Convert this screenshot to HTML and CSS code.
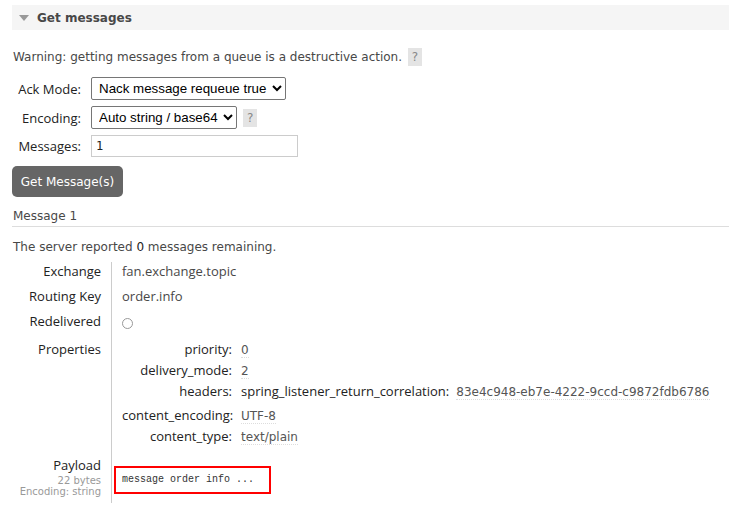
FILE: index.html
```html
<!DOCTYPE html>
<html lang="en">
<head>
  <meta charset="UTF-8" />
  <title>Get messages</title>
  <link rel="stylesheet" href="styles.css">
</head>
<body>
  <div class="section">
    <h2 class="section-head"><span class="arrow"></span>Get messages</h2>

    <div class="section-body">
      <p class="warning">Warning: getting messages from a queue is a destructive action. <span class="help">?</span></p>

      <form class="get-form">
        <div class="form-grid">
          <label for="ackmode">Ack Mode:</label>
          <div>
            <select id="ackmode">
              <option>Nack message requeue true</option>
              <option>Automatic ack</option>
              <option>Reject requeue true</option>
              <option>Reject requeue false</option>
            </select>
          </div>

          <label for="encoding">Encoding:</label>
          <div>
            <select id="encoding">
              <option>Auto string / base64</option>
              <option>base64</option>
            </select>
            <span class="help">?</span>
          </div>

          <label for="count">Messages:</label>
          <div><input type="text" id="count" value="1" /></div>
        </div>
        <button type="button" class="get-btn">Get Message(s)</button>
      </form>

      <div class="message">
        <h3>Message 1</h3>
        <p class="remaining">The server reported <b>0</b> messages remaining.</p>

        <div class="facts">
          <div class="fact-key">Exchange</div>
          <div class="fact-val">fan.exchange.topic</div>

          <div class="fact-key">Routing Key</div>
          <div class="fact-val">order.info</div>

          <div class="fact-key">Redelivered</div>
          <div class="fact-val"><span class="radio"></span></div>

          <div class="fact-key">Properties</div>
          <div class="fact-val">
            <div class="props">
              <div class="prop-key">priority:</div>
              <div class="prop-val"><span>0</span></div>
              <div class="prop-key">delivery_mode:</div>
              <div class="prop-val"><span>2</span></div>
              <div class="prop-key">headers:</div>
              <div class="prop-val">
                <div class="props nested">
                  <div class="prop-key">spring_listener_return_correlation:</div>
                  <div class="prop-val"><span>83e4c948-eb7e-4222-9ccd-c9872fdb6786</span></div>
                </div>
              </div>
              <div class="prop-key after-nested">content_encoding:</div>
              <div class="prop-val after-nested"><span>UTF-8</span></div>
              <div class="prop-key">content_type:</div>
              <div class="prop-val"><span>text/plain</span></div>
            </div>
          </div>

          <div class="fact-key payload-key">
            Payload
            <sub>22 bytes</sub>
            <sub>Encoding: string</sub>
          </div>
          <div class="fact-val">
            <pre class="payload">message order info ...</pre>
          </div>
        </div>
      </div>
    </div>
  </div>
</body>
</html>
```

FILE: styles.css
```css
* {
  margin: 0;
  padding: 0;
  box-sizing: border-box;
}

body {
  font: 12px "DejaVu Sans", Verdana, sans-serif;
  color: #484848;
  background: #fff;
  padding: 5px 0 0 12px;
  overflow: hidden;
}

.section-head {
  display: flex;
  align-items: center;
  height: 25px;
  background: #f5f5f5;
  font-size: 12px;
  font-weight: bold;
  color: #484848;
  padding-left: 7px;
}

.arrow {
  width: 0;
  height: 0;
  border-left: 5px solid transparent;
  border-right: 5px solid transparent;
  border-top: 6px solid #999;
  margin-right: 8px;
}

.section-body {
  padding-top: 18px;
}

.warning {
  line-height: 18px;
  padding-left: 1px;
}

.help {
  display: inline-block;
  background: #e4e4e4;
  color: #888;
  padding: 0 4px;
  line-height: 18px;
  margin-left: 2px;
}

.form-grid {
  display: grid;
  grid-template-columns: 69px auto;
  column-gap: 10px;
  row-gap: 6px;
  margin-top: 11px;
  align-items: center;
}

.form-grid label {
  text-align: right;
  font: 13px "Open Sans", sans-serif;
  color: #222;
}

.form-grid > div {
  display: flex;
  align-items: center;
  gap: 4px;
}

select {
  font: 13.33px "Liberation Sans", Arial, sans-serif;
  color: #000;
  height: 23px;
  padding: 0 0 0 3px;
  border: 1px solid #767676;
  border-radius: 2px;
  background: #fff;
}

#ackmode {
  width: 195px;
}

#encoding {
  width: 146px;
}

input {
  width: 207px;
  height: 22px;
  border: 1px solid #ccc;
  font: 12px "DejaVu Sans Mono", monospace;
  padding: 0 4px;
  color: #222;
}

.get-btn {
  margin-top: 9px;
  background: #666;
  color: #fff;
  border: none;
  border-radius: 5px;
  font: 12px "DejaVu Sans", Verdana, sans-serif;
  width: 111px;
  height: 31px;
}

.message h3 {
  font-size: 12px;
  font-weight: normal;
  margin-top: 12px;
  padding: 0 0 3px 1px;
  border-bottom: 1px solid #ddd;
}

.remaining {
  margin-top: 13px;
  padding-left: 1px;
}

.remaining b {
  font-weight: normal;
  color: #222;
}

.facts {
  display: grid;
  grid-template-columns: 99px auto;
  margin-top: 8px;
}

.fact-key {
  text-align: right;
  font: 13px "Open Sans", sans-serif;
  color: #222;
  padding: 0 10px 6px 0;
  line-height: 19px;
}

.fact-val {
  border-left: 1px solid #ccc;
  padding: 0 0 6px 10px;
  font: 13px "Open Sans", sans-serif;
  line-height: 19px;
  min-height: 25px;
}

.radio {
  display: inline-block;
  width: 11px;
  height: 11px;
  border: 1px solid #999;
  border-radius: 50%;
  margin-top: 6px;
}

.props {
  display: grid;
  grid-template-columns: 110px max-content;
  column-gap: 9px;
  row-gap: 2px;
}

.props.nested {
  grid-template-columns: max-content max-content;
  column-gap: 7px;
}

.prop-key {
  text-align: right;
  color: #222;
  font: 13px "Open Sans", sans-serif;
}

.prop-key.after-nested,
.prop-val.after-nested {
  margin-top: 3px;
}

.prop-val span {
  font: 12px "DejaVu Sans", Verdana, sans-serif;
  color: #555;
  border-bottom: 1px dotted #ddd;
}

.payload-key {
  padding-top: 4px;
}

.payload-key sub {
  display: block;
  font: 10px "DejaVu Sans", Verdana, sans-serif;
  color: #999;
  line-height: 11px;
  vertical-align: baseline;
}

.payload {
  margin: 14px 0 0 -8px;
  width: 157px;
  border: 2px solid #f00;
  padding: 4px 6px;
  font: 10px "Liberation Mono", monospace;
  color: #333;
  line-height: 16px;
}
```
